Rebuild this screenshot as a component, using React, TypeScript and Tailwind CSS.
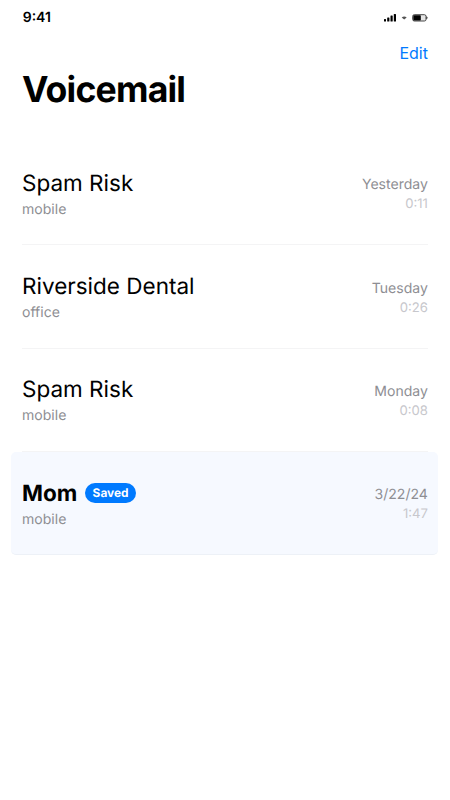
import React from "react";

type Voicemail = { name: string; label: string; date: string; length: string; saved?: boolean };

const voicemails: Voicemail[] = [
  { name: "Spam Risk", label: "mobile", date: "Yesterday", length: "0:11" },
  { name: "Riverside Dental", label: "office", date: "Tuesday", length: "0:26" },
  { name: "Spam Risk", label: "mobile", date: "Monday", length: "0:08" },
  { name: "Mom", label: "mobile", date: "3/22/24", length: "1:47", saved: true },
];

function StatusIcons() {
  return (
    <svg className="h-[10px] w-[46px]" viewBox="0 0 46 10">
      <rect x="2" y="6" width="2" height="2.5" rx="0.5" />
      <rect x="5.2" y="4.4" width="2.2" height="4.1" rx="0.5" />
      <rect x="8.5" y="2.6" width="2.2" height="5.9" rx="0.5" />
      <rect x="11.8" y="1" width="2.2" height="7.5" rx="0.5" />
      <path d="M19.7 4.4Q22.2 2.4 24.7 4.4L22.2 6.6Z" fill="#555" />
      <rect x="30.7" y="1.7" width="13.3" height="6.3" rx="1.6" fill="#e5e5e5" stroke="#333" strokeWidth="0.9" />
      <rect x="31.3" y="2.3" width="7.5" height="5.1" rx="0.6" />
      <path d="M44.5 3.2Q46.5 4.8 44.5 6.4Z" />
    </svg>
  );
}

function Row({ item }: { item: Voicemail }) {
  return (
    <li
      className={
        item.saved
          ? "-mr-[10.5px] -ml-[11px] flex h-[103.3px] items-center justify-between rounded-[5px] border-b border-[#edf1f7] bg-[#f6f9ff] pt-[2px] pr-[10.5px] pl-[11px]"
          : "flex h-[103.3px] items-center justify-between border-b border-[#f4f4f5] pt-[2px]"
      }
    >
      <div className="pt-px">
        <div className="flex items-center gap-2">
          <span className={item.saved ? "text-[22.5px] leading-[30px] font-bold" : "text-[22.5px] leading-[30px]"}>{item.name}</span>
          {item.saved && <span className="-mt-px rounded-full bg-[#007aff] px-[7.3px] text-[11.9px] leading-[19.5px] font-bold text-white">Saved</span>}
        </div>
        <div className="text-[14.06px] leading-[22px] text-[#8e8e93]">{item.label}</div>
      </div>
      <div className="text-right">
        <div className="text-[14.06px] leading-[20px] text-[#8e8e93]">{item.date}</div>
        <div className="text-[13.1px] leading-[18px] text-[#c7c7cc]">{item.length}</div>
      </div>
    </li>
  );
}

export default function App() {
  return (
    <main className="h-[800px] w-[450px] overflow-hidden bg-white pr-[22.1px] pl-[22px] font-['Inter',sans-serif] text-black [text-rendering:geometricPrecision]">
      <header className="flex h-[35px] items-center justify-between">
        <span className="pl-[0.7px] text-[14px] font-semibold">9:41</span>
        <StatusIcons />
      </header>
      <div className="flex h-[36px] items-center justify-end">
        <button className="text-[16px] text-[#007aff]">Edit</button>
      </div>
      <h1 className="h-[71.1px] pt-px text-[35.6px] leading-[36px] font-bold tracking-[-0.8px]">Voicemail</h1>
      <ul>{voicemails.map((item, i) => <Row key={i} item={item} />)}</ul>
    </main>
  );
}
